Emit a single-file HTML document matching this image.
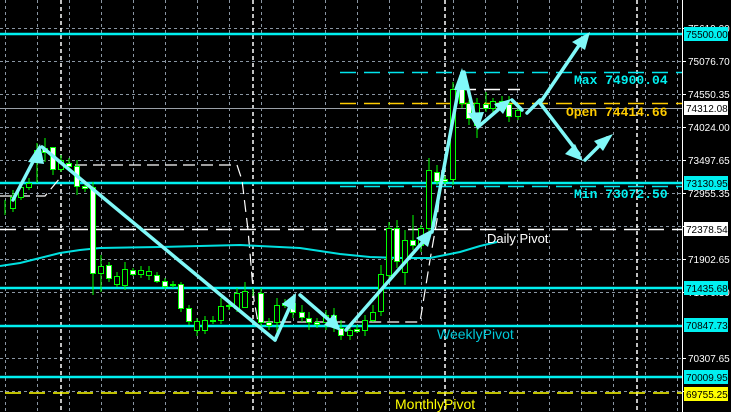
<!DOCTYPE html>
<html><head><meta charset="utf-8"><style>
html,body{margin:0;padding:0;background:#000;width:731px;height:412px;overflow:hidden}
svg{display:block}
.ax{font-family:"Liberation Sans",sans-serif;font-size:10px;fill:#fff}
.mono{font-family:"Liberation Mono",monospace;font-size:13px;font-weight:bold}
</style></head><body>
<svg width="731" height="412" viewBox="0 0 731 412" xmlns="http://www.w3.org/2000/svg">
<rect width="731" height="412" fill="#000"/>
<g stroke="#8a96a3" stroke-width="1" stroke-dasharray="3,3">
<path d="M5.5 0V412M37.5 0V412M69.5 0V412M101.5 0V412M133.5 0V412M165.5 0V412M197.5 0V412M229.5 0V412M261.5 0V412M293.5 0V412M325.5 0V412M357.5 0V412M389.5 0V412M421.5 0V412M453.5 0V412M485.5 0V412M517.5 0V412M549.5 0V412M581.5 0V412M613.5 0V412M645.5 0V412M677.5 0V412"/>
<path d="M0 28.5H682M0 61.5H682M0 94.5H682M0 127.5H682M0 160.5H682M0 193.5H682M0 226.5H682M0 259.5H682M0 292.5H682M0 358.5H682M0 391.5H682"/>
</g>
<g stroke="#fff" stroke-width="1.5" stroke-dasharray="4,3">
<path d="M61 0V412M253 0V412M445 0V412M637 0V412"/>
</g>
<line x1="0" y1="108.5" x2="682" y2="108.5" stroke="#9aa0a8" stroke-width="1"/>
<line x1="0" y1="229.5" x2="682" y2="229.5" stroke="#fff" stroke-width="1.5" stroke-dasharray="16,8"/>
<line x1="5" y1="393" x2="682" y2="393" stroke="#ffff00" stroke-width="1.5" stroke-dasharray="16,8"/>
<line x1="340" y1="72.5" x2="682" y2="72.5" stroke="#00e5ee" stroke-width="1.5" stroke-dasharray="16,8"/>
<line x1="340" y1="186.5" x2="682" y2="186.5" stroke="#00e5ee" stroke-width="1.5" stroke-dasharray="16,8"/>
<line x1="340" y1="103.5" x2="682" y2="103.5" stroke="#ffcc00" stroke-width="1.5" stroke-dasharray="16,8"/>
<line x1="460" y1="89.5" x2="520" y2="89.5" stroke="#fff" stroke-width="1.5" stroke-dasharray="16,8"/>
<g stroke="#00f0f0" stroke-width="2.5">
<line x1="0" y1="34" x2="682" y2="34"/>
<line x1="0" y1="183" x2="682" y2="183"/>
<line x1="0" y1="288" x2="682" y2="288"/>
<line x1="0" y1="326" x2="682" y2="326"/>
<line x1="0" y1="377" x2="682" y2="377"/>
</g>
<path d="M0 196H45L60 178M75 165H237L242 180L248 230L254 300L258 322H420L430 260L437 220L442 170" fill="none" stroke="#fff" stroke-width="1.2" stroke-dasharray="12,6"/>
<polyline points="0,266 20,263 40,258 60,253 80,250 100,248 160,247 240,245 300,248 340,254 370,257 400,258 430,258 460,252 480,246 497,242" fill="none" stroke="#00e0e0" stroke-width="2"/>
<g stroke="#00ff00" stroke-width="1">
<path d="M5 200V215M13 190V212M21 182V200M29 178V190M37 143V183M45 138V162M53 147V175M61 155V172M69 158V170M77 160V195M85 182V192M93 182V295M101 255V292M109 262V282M117 272V287M125 262V290M133 268V276M141 266V278M149 266V280M157 272V283M165 278V289M173 281V288M181 282V312M189 305V325M197 318V336M205 316V334M213 316V324M221 298V324M229 300V310M237 288V312M245 282V308M253 288V296M261 288V330M269 318V330M277 298V332M285 299V308M293 305V318M302 305V322M309 312V330M317 318V328M326 310V330M334 308V332M341 320V340M350 325V340M357 325V333M365 315V336M373 305V322M381 265V316M389 222V282M397 220V268M405 230V285M413 215V250M421 225V252M429 158V232M437 165V185M445 176V184M453 82V185M462 80V108M469 100V125M477 98V138M486 92V112M493 98V116M502 96V106M509 96V122M518 106V120"/>
</g>
<g stroke="#00ff00" stroke-width="1" fill="#000">
<rect x="10.5" y="197.5" width="5" height="11"/><rect x="18.5" y="187.5" width="5" height="10"/><rect x="26.5" y="183.5" width="5" height="4"/><rect x="34.5" y="150.5" width="5" height="4"/><rect x="58.5" y="160.5" width="5" height="9"/><rect x="98.5" y="266.5" width="5" height="7"/><rect x="114.5" y="276.5" width="5" height="8"/><rect x="122.5" y="269.5" width="5" height="16"/><rect x="138.5" y="270.5" width="5" height="4"/><rect x="146.5" y="271.5" width="5" height="4"/><rect x="194.5" y="321.5" width="5" height="9"/><rect x="202.5" y="320.5" width="5" height="10"/><rect x="218.5" y="306.5" width="5" height="14"/><rect x="234.5" y="293.5" width="5" height="15"/><rect x="242.5" y="291.5" width="5" height="16"/><rect x="274.5" y="305.5" width="5" height="17"/><rect x="323.5" y="315.5" width="5" height="7"/><rect x="347.5" y="330.5" width="5" height="5"/><rect x="362.5" y="320.5" width="5" height="10"/><rect x="370.5" y="312.5" width="5" height="8"/><rect x="378.5" y="274.5" width="5" height="37"/><rect x="386.5" y="228.5" width="5" height="47"/><rect x="402.5" y="240.5" width="5" height="32"/><rect x="418.5" y="228.5" width="5" height="17"/><rect x="426.5" y="170.5" width="5" height="58"/><rect x="450.5" y="89.5" width="5" height="90"/><rect x="474.5" y="103.5" width="5" height="22"/><rect x="490.5" y="101.5" width="5" height="7"/><rect x="515.5" y="110.5" width="5" height="6"/>
</g>
<g stroke="#00ff00" stroke-width="1" fill="#fff">
<rect x="42.5" y="148.5" width="5" height="4"/><rect x="50.5" y="147.5" width="5" height="22"/><rect x="66.5" y="163.5" width="5" height="3"/><rect x="74.5" y="166.5" width="5" height="20"/><rect x="82.5" y="186.5" width="5" height="2"/><rect x="90.5" y="187.5" width="5" height="86"/><rect x="106.5" y="265.5" width="5" height="13"/><rect x="130.5" y="270.5" width="5" height="4"/><rect x="154.5" y="275.5" width="5" height="6"/><rect x="162.5" y="281.5" width="5" height="5"/><rect x="170.5" y="284.5" width="5" height="1"/><rect x="178.5" y="284.5" width="5" height="24"/><rect x="186.5" y="308.5" width="5" height="13"/><rect x="210.5" y="320.5" width="5" height="1"/><rect x="226.5" y="305.5" width="5" height="1"/><rect x="258.5" y="293.5" width="5" height="29"/><rect x="266.5" y="322.5" width="5" height="3"/><rect x="282.5" y="303.5" width="5" height="2"/><rect x="290.5" y="303.5" width="5" height="9"/><rect x="299.5" y="312.5" width="5" height="5"/><rect x="306.5" y="318.5" width="5" height="4"/><rect x="314.5" y="322.5" width="5" height="2"/><rect x="331.5" y="315.5" width="5" height="10"/><rect x="338.5" y="328.5" width="5" height="7"/><rect x="354.5" y="329.5" width="5" height="2"/><rect x="394.5" y="228.5" width="5" height="33"/><rect x="410.5" y="240.5" width="5" height="5"/><rect x="434.5" y="172.5" width="5" height="9"/><rect x="442.5" y="179.5" width="5" height="2"/><rect x="459.5" y="89.5" width="5" height="14"/><rect x="466.5" y="103.5" width="5" height="15"/><rect x="483.5" y="104.5" width="5" height="4"/><rect x="499.5" y="101.5" width="5" height="3"/><rect x="506.5" y="104.5" width="5" height="12"/>
</g>
<g stroke="#80f8f8" stroke-width="3.5" fill="none" stroke-linecap="round">
<path d="M13 200L38 152"/><path d="M42 147L275 340"/><path d="M275 340L293 300"/><path d="M300 295L336 326"/><path d="M346 330L428 236"/><path d="M432 232L461 76"/><path d="M464 72L476 122"/><path d="M478 127L506 103"/><path d="M512 100L522 110"/><path d="M527 113L540 100"/><path d="M540 103L579 154"/><path d="M540 103L584 38"/><path d="M585 160L607 138"/>
</g>
<g fill="#80f8f8">
<polygon points="40,144 28,162 44,164"/><polygon points="296,293 282,304 295,311"/><polygon points="341,331 324,325 334,314"/><polygon points="433,229 416,238 428,247"/><polygon points="462,68 454,90 469,90"/><polygon points="478,130 468,113 484,112"/><polygon points="511,99 494,104 503,114"/><polygon points="590,32 572,42 585,50"/><polygon points="583,161 565,154 575,144"/><polygon points="613,134 594,141 603,151"/>
</g>
<text x="487" y="243" font-family="Liberation Sans,sans-serif" font-size="13" fill="#fff">Daily Pivot</text>
<text x="437" y="339" font-family="Liberation Sans,sans-serif" font-size="14" fill="#00c8d8">WeeklyPivot</text>
<text x="395" y="409" font-family="Liberation Sans,sans-serif" font-size="14" fill="#ffff00">MonthlyPivot</text>
<text x="574" y="84" class="mono" fill="#00f0f0">Max 74900.04</text>
<text x="566" y="116" class="mono" fill="#ffcc00">Open 74414.66</text>
<text x="574" y="198" class="mono" fill="#00f0f0">Min 73072.50</text>
<rect x="682" y="0" width="49" height="412" fill="#000"/>
<line x1="682.5" y1="0" x2="682.5" y2="412" stroke="#fff"/>
<g stroke="#fff"><path d="M682 28.5H686M682 61.5H686M682 94.5H686M682 127.5H686M682 160.5H686M682 193.5H686M682 226.5H686M682 259.5H686M682 292.5H686M682 358.5H686M682 391.5H686"/></g>
<text x="688" y="32" class="ax">75619.00</text>
<text x="688" y="65" class="ax">75076.70</text>
<text x="688" y="98" class="ax">74550.35</text>
<text x="688" y="131" class="ax">74024.00</text>
<text x="688" y="164" class="ax">73497.65</text>
<text x="688" y="197" class="ax">72955.35</text>
<text x="688" y="263" class="ax">71902.65</text>
<text x="688" y="296" class="ax">71370.30</text>
<text x="688" y="362" class="ax">70307.65</text>
<rect x="684" y="27" width="44" height="14" fill="#00f0f0"/><text x="686" y="38" class="ax" style="fill:#000">75500.00</text>
<rect x="684" y="101" width="44" height="14" fill="#fff"/><text x="686" y="112" class="ax" style="fill:#000">74312.08</text>
<rect x="684" y="176" width="44" height="14" fill="#00f0f0"/><text x="686" y="187" class="ax" style="fill:#000">73130.95</text>
<rect x="684" y="222" width="44" height="14" fill="#fff"/><text x="686" y="233" class="ax" style="fill:#000">72378.54</text>
<rect x="684" y="281" width="44" height="14" fill="#00f0f0"/><text x="686" y="292" class="ax" style="fill:#000">71435.68</text>
<rect x="684" y="318" width="44" height="14" fill="#00f0f0"/><text x="686" y="329" class="ax" style="fill:#000">70847.73</text>
<rect x="684" y="370" width="44" height="14" fill="#00f0f0"/><text x="686" y="381" class="ax" style="fill:#000">70009.95</text>
<rect x="684" y="387" width="44" height="14" fill="#ffff00"/><text x="686" y="398" class="ax" style="fill:#000">69755.25</text>
</svg>
</body></html>
